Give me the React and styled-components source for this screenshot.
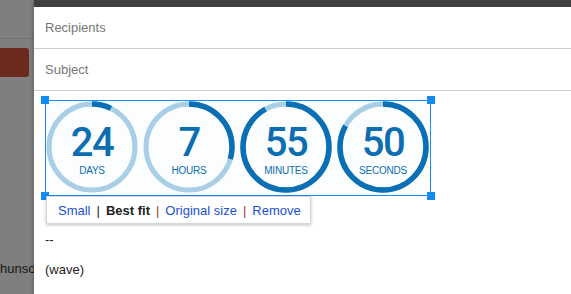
import React from "react";
import styled, { createGlobalStyle } from "styled-components";

const Global = createGlobalStyle`
  html, body { margin: 0; padding: 0; overflow: hidden; }
  body { font-family: "Liberation Sans", Arial, sans-serif; background: #7f7f7f; }
`;

const Screen = styled.div`
  display: flex;
  width: 571px;
  height: 294px;
  overflow: hidden;
`;

const Sidebar = styled.div`
  width: 34px;
  flex-shrink: 0;
  background: #7f7f7f;
  display: flex;
  flex-direction: column;
  overflow: hidden;
`;

const SideTop = styled.div`
  height: 38px;
  border-bottom: 1px solid #707070;
`;

const ComposeBtn = styled.div`
  margin-top: 9px;
  width: 29px;
  height: 29px;
  background: #6c2a1e;
  border-radius: 0 3px 3px 0;
`;

const SideName = styled.div`
  margin-top: auto;
  margin-bottom: 18px;
  font-size: 13px;
  color: #141414;
  white-space: nowrap;
`;

const Panel = styled.div`
  flex: 1;
  background: #fff;
  border-top: 7px solid #404040;
  box-shadow: -1px 0 3px rgba(0, 0, 0, 0.25);
  display: flex;
  flex-direction: column;
  position: relative;
`;

const Field = styled.div`
  height: ${(p) => p.$h}px;
  border-bottom: 1px solid #cfcfcf;
  display: flex;
  align-items: center;
  padding-left: 11px;
  font-size: 13px;
  color: #777;
`;

const Body = styled.div`
  padding: 9px 0 0 11px;
  display: flex;
  flex-direction: column;
  font-size: 13px;
  color: #222;
`;

const Selection = styled.div`
  position: relative;
  align-self: flex-start;
  border: 1px solid #1a8cff;
`;

const Handle = styled.div`
  position: absolute;
  width: 8px;
  height: 8px;
  background: #0f8cf5;
  ${(p) => (p.$top ? "top: -5px;" : "bottom: -5px;")}
  ${(p) => (p.$left ? "left: -5px;" : "right: -5px;")}
`;

const Dials = styled.div`
  display: flex;
  gap: 5px;
  width: 384px;
  height: 94px;
  background: #fcfdfe;
`;

const Dial = styled.div`
  position: relative;
  width: 92px;
  height: 92px;
  display: flex;
  flex-direction: column;
  align-items: center;
  padding-top: 26px;
  box-sizing: border-box;
  color: #0b6db2;
`;

const DialSvg = styled.svg`
  position: absolute;
  inset: 0;
`;

const Num = styled.div`
  position: relative;
  font-family: Roboto, "Liberation Sans", sans-serif;
  font-weight: 500;
  font-size: 40px;
  line-height: 32px;
  letter-spacing: -1.5px;
  height: 32px;
`;

const Unit = styled.div`
  position: relative;
  margin-top: 7px;
  font-size: 10px;
  line-height: 10px;
  letter-spacing: -0.2px;
`;

const Toolbar = styled.div`
  position: absolute;
  left: 0;
  top: calc(100% + 1px);
  width: 265px;
  height: 28px;
  box-sizing: border-box;
  background: #fff;
  border: 1px solid #d6d6d6;
  box-shadow: 0 1px 3px rgba(0, 0, 0, 0.25);
  display: flex;
  align-items: center;
  padding-left: 11px;
  font-size: 13px;
  white-space: nowrap;
  z-index: 2;
`;

const Link = styled.span`
  color: ${(p) => (p.$active ? "#222" : "#1c4fd0")};
  font-weight: ${(p) => (p.$active ? "bold" : "normal")};
`;

const Sep = styled.span`
  margin: 0 6px;
  color: ${(p) => p.$c};
`;

const Line = styled.div`
  margin-top: ${(p) => p.$mt}px;
  line-height: 15px;
`;

const R = 43;
const C = 2 * Math.PI * R;

function Ring({ value, label, angle }) {
  const len = (angle / 360) * C;
  return (
    <Dial>
      <DialSvg width="92" height="92" viewBox="0 0 92 92">
        <circle cx="46" cy="46" r={R} fill="none" stroke="#a9cfe6" strokeWidth="5" />
        <circle
          cx="46"
          cy="46"
          r={R}
          fill="none"
          stroke="#0a6fb5"
          strokeWidth="5.5"
          strokeDasharray={`${len} ${C}`}
          transform="rotate(-90 46 46)"
        />
      </DialSvg>
      <Num>{value}</Num>
      <Unit>{label}</Unit>
    </Dial>
  );
}

const dials = [
  { value: "24", label: "DAYS", angle: 26 },
  { value: "7", label: "HOURS", angle: 106 },
  { value: "55", label: "MINUTES", angle: 331 },
  { value: "50", label: "SECONDS", angle: 299 },
];

export default function App() {
  return (
    <>
      <Global />
      <Screen>
        <Sidebar>
          <SideTop />
          <ComposeBtn />
          <SideName>hunson</SideName>
        </Sidebar>
        <Panel>
          <Field $h={41}>Recipients</Field>
          <Field $h={41}>Subject</Field>
          <Body>
            <Selection>
              <Dials>
                {dials.map((d) => (
                  <Ring key={d.label} {...d} />
                ))}
              </Dials>
              <Handle $top $left />
              <Handle $top />
              <Handle $left />
              <Handle />
              <Toolbar>
                <Link>Small</Link>
                <Sep $c="#222">|</Sep>
                <Link $active>Best fit</Link>
                <Sep $c="#a4431d">|</Sep>
                <Link>Original size</Link>
                <Sep $c="#a4431d">|</Sep>
                <Link>Remove</Link>
              </Toolbar>
            </Selection>
            <Line $mt={36}>--</Line>
            <Line $mt={15}>(wave)</Line>
          </Body>
        </Panel>
      </Screen>
    </>
  );
}
